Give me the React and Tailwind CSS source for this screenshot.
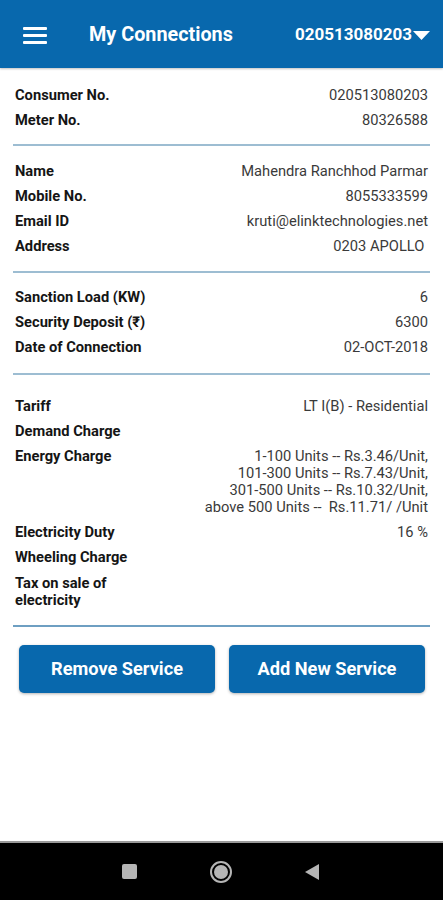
import React from "react";

const Row = ({ label, value, children }) => (
  <div className="flex justify-between items-start py-[4px] leading-[17px] text-[14.7px]">
    <div className="font-bold text-[#151515] w-[140px] shrink-0">{label}</div>
    <div className="text-right text-[#3a3a3a] whitespace-pre">{children ?? value}</div>
  </div>
);

const Divider = ({ dark }) => (
  <div className={dark ? "h-[2px] bg-[#6e9fc2] mx-[13px]" : "h-[2px] bg-[#9dbdd2] mx-[13px]"} />
);

export default function App() {
  return (
    <div className="min-h-[900px] h-[900px] flex flex-col bg-white" style={{ fontFamily: "Roboto, 'Noto Sans', sans-serif" }}>
      <header className="h-[68px] bg-[#0868ad] flex items-center shrink-0 shadow-[0_1px_2px_rgba(0,0,0,0.25)]">
        <div className="ml-[23px] w-[24px] flex flex-col gap-[4px] mt-[2px]">
          <div className="h-[3px] bg-white rounded-[1px]" />
          <div className="h-[3px] bg-white rounded-[1px]" />
          <div className="h-[3px] bg-white rounded-[1px]" />
        </div>
        <div className="ml-[42px] text-white font-bold text-[19.8px] mt-[2px]">My Connections</div>
        <div className="ml-auto mr-[13px] flex items-center text-white font-bold text-[17px] mt-[2px]">
          <span>020513080203</span>
          <svg width="17" height="9" viewBox="0 0 17 9" className="ml-[1px]">
            <path d="M0 0 H17 L8.5 9 Z" fill="white" />
          </svg>
        </div>
      </header>

      <div className="px-[15px] pt-[15px] pb-[11px]">
        <Row label="Consumer No." value="020513080203" />
        <Row label="Meter No." value="80326588" />
      </div>
      <Divider />
      <div className="px-[15px] pt-[13px] pb-[12px]">
        <Row label="Name" value="Mahendra Ranchhod Parmar" />
        <Row label="Mobile No." value="8055333599" />
        <Row label="Email ID" value="kruti@elinktechnologies.net" />
        <Row label="Address" value="0203 APOLLO " />
      </div>
      <Divider />
      <div className="px-[15px] pt-[12px] pb-[13px]">
        <Row label="Sanction Load (KW)" value="6" />
        <Row label="Security Deposit (₹)" value="6300" />
        <Row label="Date of Connection" value="02-OCT-2018" />
      </div>
      <Divider />
      <div className="px-[15px] pt-[19px] pb-[12px]">
        <Row label="Tariff" value="LT I(B) - Residential" />
        <Row label="Demand Charge" value="" />
        <Row label="Energy Charge">
          {"1-100 Units -- Rs.3.46/Unit,\n101-300 Units -- Rs.7.43/Unit,\n301-500 Units -- Rs.10.32/Unit,\nabove 500 Units --  Rs.11.71/ /Unit"}
        </Row>
        <Row label="Electricity Duty" value="16 %" />
        <Row label="Wheeling Charge" value="" />
        <div className="pt-[1px]">
          <Row label="Tax on sale of electricity" value="" />
        </div>
      </div>
      <Divider dark />

      <div className="flex gap-[14px] pl-[19px] pr-[18px] pt-[18px]">
        <button className="w-[196px] h-[48px] bg-[#0868ad] rounded-[5px] text-white font-bold text-[18.2px] shadow-[0_1px_3px_rgba(0,0,0,0.3)]">
          Remove Service
        </button>
        <button className="w-[196px] h-[48px] bg-[#0868ad] rounded-[5px] text-white font-bold text-[18.2px] shadow-[0_1px_3px_rgba(0,0,0,0.3)]">
          Add New Service
        </button>
      </div>

      <div className="flex-1" />

      <div className="h-[59px] bg-black border-t-[2px] border-[#9a9a9a] flex items-center shrink-0">
        <div className="ml-[122px] w-[15px] h-[15px] bg-[#b5b5b5] rounded-[2px]" />
        <div className="ml-[73px] w-[22px] h-[22px] rounded-full border-[2px] border-[#b5b5b5] flex items-center justify-center">
          <div className="w-[14px] h-[14px] rounded-full bg-[#b5b5b5]" />
        </div>
        <svg width="14" height="16" viewBox="0 0 14 16" className="ml-[73px]">
          <path d="M14 0 V16 L0 8 Z" fill="#b5b5b5" />
        </svg>
      </div>
    </div>
  );
}
